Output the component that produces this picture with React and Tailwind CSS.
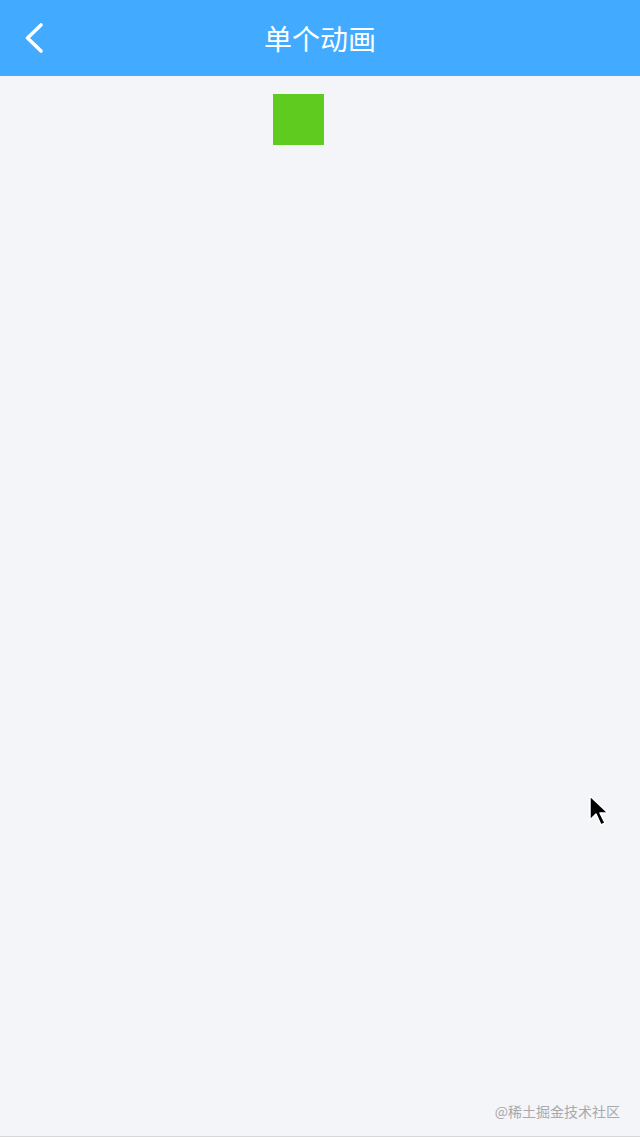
const cjk = { fontFamily: '"Noto Sans CJK SC", "Noto Sans", sans-serif' };

function BackIcon() {
  return (
    <svg width="24" height="34" viewBox="0 0 24 34" fill="none">
      <polyline
        points="19,4 5.5,17 19,30"
        stroke="#fff"
        strokeWidth="3.6"
        strokeLinecap="round"
        strokeLinejoin="round"
      />
    </svg>
  );
}

function Cursor() {
  return (
    <svg
      className="absolute left-[588px] top-[794px]"
      width="24"
      height="34"
      viewBox="0 0 24 34"
    >
      <path
        d="M2 2 L2 26 L8 20 L13 31 L17 29 L12 19 L20 19 Z"
        fill="#000"
        stroke="#fff"
        strokeWidth="1.5"
        strokeLinejoin="round"
      />
    </svg>
  );
}

export default function App() {
  return (
    <div className="relative flex h-[1140px] w-[640px] flex-col bg-[#f3f5f9]" style={cjk}>
      {/* Header */}
      <header className="relative flex h-[76px] items-center justify-center bg-[#42abff]">
        <button className="absolute left-[22px] top-[21px]">
          <BackIcon />
        </button>
        <h1 className="text-[28px] font-normal leading-none text-white">单个动画</h1>
      </header>

      {/* Animated box */}
      <main className="flex-1 pl-[273px] pt-[18px]">
        <div className="h-[51px] w-[51px] bg-[#60cb1f]" />
      </main>

      {/* Watermark */}
      <div className="flex justify-end pb-[14px] pr-[20px] text-[14px] text-[#a7a9ad]">
        @稀土掘金技术社区
      </div>
      <div className="h-[4px] border-t border-[#d6d8dc] bg-white" />

      <Cursor />
    </div>
  );
}
